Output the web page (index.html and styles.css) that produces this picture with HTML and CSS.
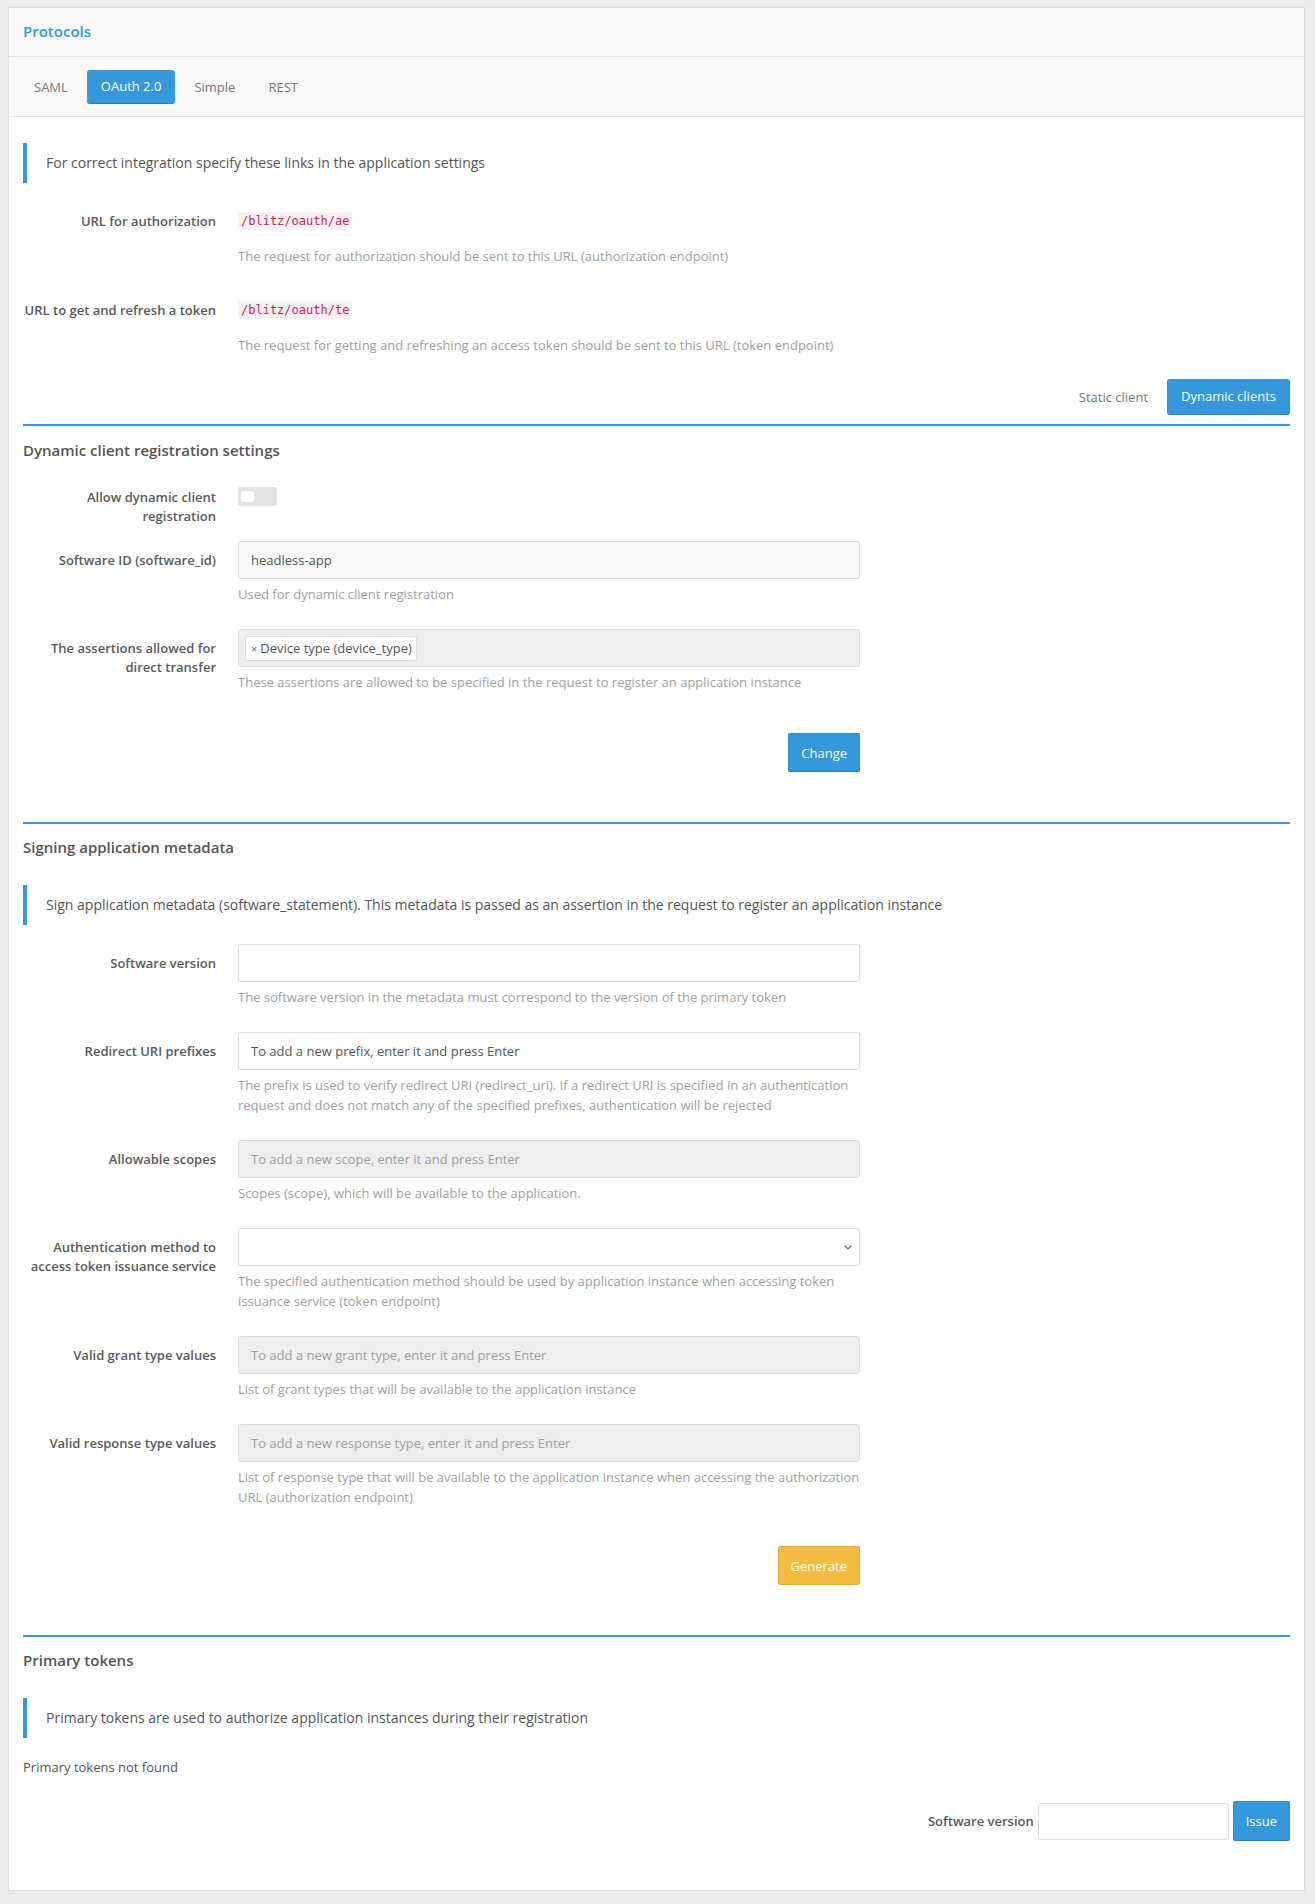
FILE: index.html
```html
<!DOCTYPE html>
<html lang="en">
<head>
<meta charset="UTF-8">
<meta name="viewport" content="width=device-width, initial-scale=1.0">
<title>Protocols</title>
<link rel="stylesheet" href="styles.css">
</head>
<body>
<div class="panel">
    <div class="panel-heading">Protocols</div>
    <div class="protocol-tabs">
        <a class="pill">SAML</a>
        <a class="pill active">OAuth 2.0</a>
        <a class="pill">Simple</a>
        <a class="pill">REST</a>
    </div>

    <div class="panel-body">
        <div class="callout callout-top">For correct integration specify these links in the application settings</div>

        <div class="static-row">
            <div class="label">URL for authorization</div>
            <div class="value">
                <code>/blitz/oauth/ae</code>
                <div class="help help-static">The request for authorization should be sent to this URL (authorization endpoint)</div>
            </div>
        </div>
        <div class="static-row">
            <div class="label">URL to get and refresh a token</div>
            <div class="value">
                <code>/blitz/oauth/te</code>
                <div class="help help-static">The request for getting and refreshing an access token should be sent to this URL (token endpoint)</div>
            </div>
        </div>

        <div class="client-tabs">
            <a class="pill">Static client</a>
            <a class="pill active">Dynamic clients</a>
        </div>

        <!-- Dynamic client registration -->
        <div class="section first">
            <h4 class="section-title">Dynamic client registration settings</h4>

            <div class="form-row toggle-row">
                <div class="label">Allow dynamic client registration</div>
                <div class="value"><span class="toggle"><span class="knob"></span></span></div>
            </div>
            <div class="form-row">
                <div class="label">Software ID (software_id)</div>
                <div class="value">
                    <input class="input filled" type="text" value="headless-app">
                    <div class="help">Used for dynamic client registration</div>
                </div>
            </div>
            <div class="form-row">
                <div class="label">The assertions allowed for direct transfer</div>
                <div class="value">
                    <div class="tags">
                        <span class="tag"><span class="tag-x">×</span>Device type (device_type)</span>
                    </div>
                    <div class="help">These assertions are allowed to be specified in the request to register an application instance</div>
                </div>
            </div>
            <div class="actions">
                <button class="btn btn-primary">Change</button>
            </div>
        </div>

        <!-- Signing metadata -->
        <div class="section">
            <h4 class="section-title">Signing application metadata</h4>
            <div class="callout callout-mid">Sign application metadata (software_statement). This metadata is passed as an assertion in the request to register an application instance</div>

            <div class="form-row">
                <div class="label">Software version</div>
                <div class="value">
                    <input class="input" type="text">
                    <div class="help">The software version in the metadata must correspond to the version of the primary token</div>
                </div>
            </div>
            <div class="form-row">
                <div class="label">Redirect URI prefixes</div>
                <div class="value">
                    <input class="input dark-hint" type="text" placeholder="To add a new prefix, enter it and press Enter">
                    <div class="help">The prefix is used to verify redirect URI (redirect_uri). If a redirect URI is specified in an authentication request and does not match any of the specified prefixes, authentication will be rejected</div>
                </div>
            </div>
            <div class="form-row">
                <div class="label">Allowable scopes</div>
                <div class="value">
                    <input class="input disabled" type="text" placeholder="To add a new scope, enter it and press Enter" disabled>
                    <div class="help">Scopes (scope), which will be available to the application.</div>
                </div>
            </div>
            <div class="form-row">
                <div class="label">Authentication method to access token issuance service</div>
                <div class="value">
                    <div class="select">
                        <span></span>
                        <svg width="8" height="5" viewBox="0 0 8 5"><path d="M0.7 0.7 L4 4 L7.3 0.7" fill="none" stroke="#555" stroke-width="1.2"/></svg>
                    </div>
                    <div class="help">The specified authentication method should be used by application instance when accessing token issuance service (token endpoint)</div>
                </div>
            </div>
            <div class="form-row">
                <div class="label">Valid grant type values</div>
                <div class="value">
                    <input class="input disabled" type="text" placeholder="To add a new grant type, enter it and press Enter" disabled>
                    <div class="help">List of grant types that will be available to the application instance</div>
                </div>
            </div>
            <div class="form-row">
                <div class="label">Valid response type values</div>
                <div class="value">
                    <input class="input disabled" type="text" placeholder="To add a new response type, enter it and press Enter" disabled>
                    <div class="help">List of response type that will be available to the application instance when accessing the authorization URL (authorization endpoint)</div>
                </div>
            </div>
            <div class="actions">
                <button class="btn btn-warning">Generate</button>
            </div>
        </div>

        <!-- Primary tokens -->
        <div class="section">
            <h4 class="section-title">Primary tokens</h4>
            <div class="callout callout-mid">Primary tokens are used to authorize application instances during their registration</div>
            <p class="empty">Primary tokens not found</p>
            <div class="issue-row">
                <span class="issue-label">Software version</span>
                <input class="input issue-input" type="text">
                <button class="btn btn-primary btn-issue">Issue</button>
            </div>
        </div>
    </div>
</div>
</body>
</html>
```

FILE: styles.css
```css
body {
    margin: 0;
    padding: 7px 0 13px 8px;
    background-color: #ececec;
    font-family: "Open Sans", "Liberation Sans", sans-serif;
    font-size: 13px;
    line-height: 19px;
    color: #555;
}

.panel {
    width: 1297px;
    box-sizing: border-box;
    background-color: #fff;
    border: 1px solid #e0e0e0;
}

.panel-heading {
    height: 49px;
    box-sizing: border-box;
    display: flex;
    align-items: center;
    padding: 0 14px 1px;
    background-color: #f9f9f9;
    border-bottom: 1px solid #e3e3e3;
    color: #3498db;
    font-size: 15px;
    font-weight: 600;
}

.protocol-tabs {
    display: flex;
    gap: 5px;
    padding: 13px 11px 12px;
    background-color: #f9f9f9;
    border-bottom: 1px solid #e3e3e3;
}

.pill {
    display: inline-flex;
    align-items: center;
    height: 34px;
    box-sizing: border-box;
    padding: 0 14px;
    border-radius: 3px;
    color: #777;
    cursor: pointer;
}

.pill.active {
    background-color: #3498db;
    color: #fff;
    border-bottom: 1px solid #2b84c2;
}

.panel-body {
    padding: 26px 14px 49px;
}

.callout {
    border-left: 4px solid #3498db;
    padding: 10px 19px;
    font-size: 14px;
    line-height: 20px;
    color: #555;
}

.callout-top {
    margin-bottom: 29px;
}

.callout-mid {
    margin-bottom: 19px;
}

.label {
    text-align: right;
    font-weight: 600;
    color: #5a5a5a;
}

.static-row, .form-row, .actions {
    display: grid;
    grid-template-columns: 198px 622px;
    column-gap: 22px;
    margin-left: -5px;
}

.static-row + .static-row {
    margin-top: 35px;
}

code {
    display: inline-block;
    padding: 2px 3px;
    font-family: "DejaVu Sans Mono", "Liberation Mono", monospace;
    font-size: 12px;
    line-height: 14px;
    color: #c7254e;
    background-color: #f9f2f4;
    border-radius: 3px;
    vertical-align: top;
}

.help {
    margin-top: 5px;
    line-height: 20px;
    color: #a0a0a0;
}

.help-static {
    margin-top: 15px;
}

.client-tabs {
    display: flex;
    justify-content: flex-end;
    gap: 5px;
    margin-top: 24px;
    margin-bottom: 9px;
}

.client-tabs .pill {
    height: 36px;
}

.section {
    border-top: 2px solid #3498db;
    padding-top: 13px;
    margin-top: 50px;
}

.section.first {
    margin-top: 0;
    padding-top: 14px;
}

.section-title {
    margin: 0 0 28px;
    font-size: 15px;
    line-height: 20px;
    font-weight: 600;
    color: #555;
}

.form-row {
    margin-bottom: 25px;
}

.form-row .label {
    padding-top: 9.5px;
}

.toggle-row {
    margin-bottom: 15px;
}

.toggle-row .label {
    padding-top: 0;
}

.toggle {
    display: block;
    width: 39px;
    height: 19px;
    margin-top: -1px;
    box-sizing: border-box;
    padding: 4px 3px;
    background-color: #e3e3e3;
    border-radius: 2px;
}

.knob {
    display: block;
    width: 13px;
    height: 11px;
    background-color: #fff;
    border-radius: 2px;
}

.input {
    display: block;
    width: 100%;
    height: 38px;
    box-sizing: border-box;
    padding: 0 12px;
    border: 1px solid #ddd;
    border-radius: 3px;
    background-color: #fff;
    font-family: inherit;
    font-size: 13px;
    color: #555;
}

.input::placeholder {
    color: #a0a0a0;
}

.input.filled {
    background-color: #f9f9f9;
}

.input.disabled {
    background-color: #eee;
}

.input.dark-hint::placeholder {
    color: #555;
}

.tags {
    display: flex;
    align-items: center;
    height: 38px;
    box-sizing: border-box;
    padding: 0 6px;
    border: 1px solid #ddd;
    border-radius: 3px;
    background-color: #eee;
}

.tag {
    display: inline-flex;
    align-items: center;
    height: 25px;
    box-sizing: border-box;
    padding: 0 4px 0 5px;
    border: 1px solid #ddd;
    border-radius: 2px;
    background-color: #fff;
    color: #555;
}

.tag-x {
    font-size: 11px;
    margin-right: 3px;
    color: #666;
}

.select {
    display: flex;
    justify-content: space-between;
    align-items: center;
    height: 38px;
    box-sizing: border-box;
    padding: 0 7px 0 12px;
    border: 1px solid #ddd;
    border-radius: 3px;
    background-color: #fff;
}

/* margin collapses with the form-row margin above */
.actions {
    margin-top: 39px;
}

.section.first .actions {
    margin-top: 41px;
}

.actions .btn {
    grid-column: 2;
    justify-self: end;
}

.btn {
    height: 39px;
    box-sizing: border-box;
    padding: 0 12px;
    border: 1px solid transparent;
    border-radius: 2px;
    font-family: inherit;
    font-size: 13px;
    color: #fff;
    cursor: pointer;
}

.btn-primary {
    background-color: #3498db;
    border-color: #3090d0;
    border-bottom-color: #2a7fba;
}

.btn-warning {
    background-color: #f4bb42;
    border-color: #e2aa36;
}

.empty {
    margin: 0 0 24px;
    line-height: 20px;
    color: #555;
}

.issue-row {
    display: flex;
    justify-content: flex-end;
    align-items: center;
    gap: 4px;
}

.issue-label {
    font-weight: 600;
    color: #5a5a5a;
}

.issue-input {
    width: 191px;
    height: 37px;
}

.btn-issue {
    height: 40px;
}
```
